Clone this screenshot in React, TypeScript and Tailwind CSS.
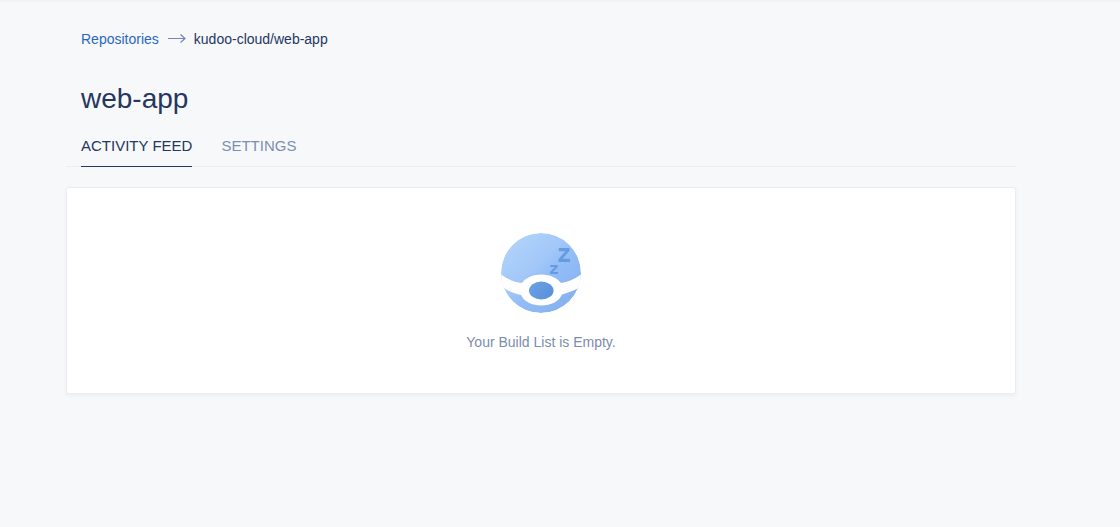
const tabs = [
  { label: 'ACTIVITY FEED', active: true },
  { label: 'SETTINGS', active: false },
];

function ArrowIcon() {
  return (
    <svg width="18" height="10" viewBox="0 0 18 10" fill="none" stroke="#7684b4" strokeWidth="1.2" aria-hidden="true">
      <path d="M0 4.5H17M12.5 0.5L17 4.5L12.5 8.5" />
    </svg>
  );
}

function SleepingIcon() {
  return (
    <svg width="80" height="80" viewBox="0 0 80 80" fill="none" aria-hidden="true">
      <defs>
        <linearGradient id="ball" x1="10" y1="8" x2="68" y2="70" gradientUnits="userSpaceOnUse">
          <stop stopColor="#b0d2fb" />
          <stop offset="0.4" stopColor="#a3c8f8" />
          <stop offset="0.6" stopColor="#94bdf6" />
          <stop offset="1" stopColor="#85b2f0" />
        </linearGradient>
        <linearGradient id="nose" x1="30" y1="50" x2="50" y2="66" gradientUnits="userSpaceOnUse">
          <stop stopColor="#6aa0e4" />
          <stop offset="1" stopColor="#5890da" />
        </linearGradient>
        <clipPath id="round">
          <circle cx="40" cy="40" r="40" />
        </clipPath>
      </defs>
      <g clipPath="url(#round)">
        <circle cx="40" cy="40" r="40" fill="url(#ball)" />
        <path
          d="M-2 40C6 46 13 49.5 21 50C25 44.5 32 41.5 40.5 41.5C49 41.5 56 45 60 50C67 49 75 46 82 40V53C75 56.5 68 59.5 61 61.5C58 68.5 50 72.5 40.5 72.5C31 72.5 23 68.5 20 62C13 60.5 5 57.5 -2 51Z"
          fill="#fff"
        />
        <ellipse cx="40.3" cy="57.5" rx="12.3" ry="9" fill="url(#nose)" />
        <path d="M57.8 15H68.6V17.8L61.6 25.8H69V29H57.4V26.2L64.4 18.2H57.8Z" fill="#669be2" />
        <path d="M49.2 32H56.8V34L52 38.9H57V41H49V39L53.8 34.1H49.2Z" fill="#669be2" />
      </g>
    </svg>
  );
}

export default function App() {
  return (
    <div className="min-h-screen border-t-2 border-[#f1f3f5] bg-[#f7f8fa] font-['Liberation_Sans',Arial,sans-serif] text-sm text-[#253661]">
      <main className="pt-[27px] pr-[104px] pl-[66px]">
        <nav aria-label="Breadcrumb" className="flex items-center px-[15px]">
          <a href="#repositories" className="text-[#2a68c0]">Repositories</a>
          <span className="mr-2 ml-[9px] flex"><ArrowIcon /></span>
          <span aria-current="page">kudoo-cloud/web-app</span>
        </nav>

        <h1 className="mt-8 px-[15px] text-[28px] leading-9">web-app</h1>

        <nav aria-label="Repository" className="mt-4 flex gap-[29px] border-b border-[#ebedf0] px-[15px]">
          {tabs.map((tab) => (
            <a
              key={tab.label}
              href="#"
              aria-current={tab.active ? 'page' : undefined}
              className={
                tab.active
                  ? '-mb-px border-b border-[#253661] pt-[3px] pb-[10px] text-[15px] leading-5'
                  : '-mb-px border-b border-transparent pt-[3px] pb-[10px] text-[15px] leading-5 text-[#7d8eb4]'
              }
            >
              {tab.label}
            </a>
          ))}
        </nav>

        <section className="mt-5 flex flex-col items-center rounded-[3px] border border-[#ebedf2] bg-white pt-[45px] pb-[41px] shadow-[0_2px_4px_rgba(40,50,90,0.05)]">
          <SleepingIcon />
          <p className="mt-[19px] text-[#7d8cac]">Your Build List is Empty.</p>
        </section>
      </main>
    </div>
  );
}
